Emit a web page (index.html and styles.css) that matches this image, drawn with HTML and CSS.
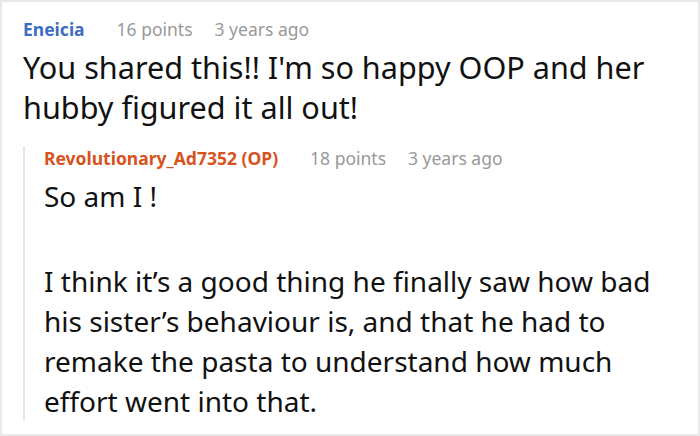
FILE: index.html
```html
<!DOCTYPE html>
<html lang="en">
<head>
    <meta charset="UTF-8">
    <meta name="viewport" content="width=device-width, initial-scale=1.0">
    <title>Comments</title>
    <link rel="stylesheet" href="styles.css">
</head>
<body>
    <div class="page">
        <div class="comment">
            <div class="comment-head">
                <span class="author">Eneicia</span>
                <span class="meta">16 points</span>
                <span class="meta">3 years ago</span>
            </div>
            <p class="comment-text">You shared this!! I'm so happy OOP and her hubby figured it all out!</p>

            <div class="reply">
                <div class="comment-head">
                    <span class="author op">Revolutionary_Ad7352 (OP)</span>
                    <span class="meta">18 points</span>
                    <span class="meta">3 years ago</span>
                </div>
                <p class="comment-text">So am I !</p>
                <p class="comment-text spaced">I think it’s a good thing he finally saw how bad his sister’s behaviour is, and that he had to remake the pasta to understand how much effort went into that.</p>
            </div>
        </div>
    </div>
</body>
</html>
```

FILE: styles.css
```css
body {
    margin: 0;
    background-color: #ffffff;
    font-family: 'Noto Sans', 'Open Sans', sans-serif;
    color: #111;
}

.page {
    height: 436px;
    box-sizing: border-box;
    border: 2px solid #e8e8e8;
    padding: 15px 8px 0 21px;
    overflow: hidden;
}

.comment-head {
    display: flex;
    gap: 22px;
    font-size: 17.5px;
    line-height: 24px;
}

.author {
    font-weight: bold;
    color: #3b6dc1;
    margin-right: 10px;
}

.author.op {
    color: #d6531f;
}

.meta {
    color: #999;
}

.comment-text {
    margin: 6px 0 0;
    font-size: 30.6px;
    line-height: 40px;
}

.reply {
    margin-top: 31px;
    border-left: 2px solid #e6e6e6;
    padding: 0 30px 0 19px;
}

.reply .comment-head {
    margin-top: -12px;
}

.reply .comment-text {
    margin-top: 6px;
    font-size: 28px;
}

.reply .comment-text.spaced {
    margin-top: 45px;
}
```
